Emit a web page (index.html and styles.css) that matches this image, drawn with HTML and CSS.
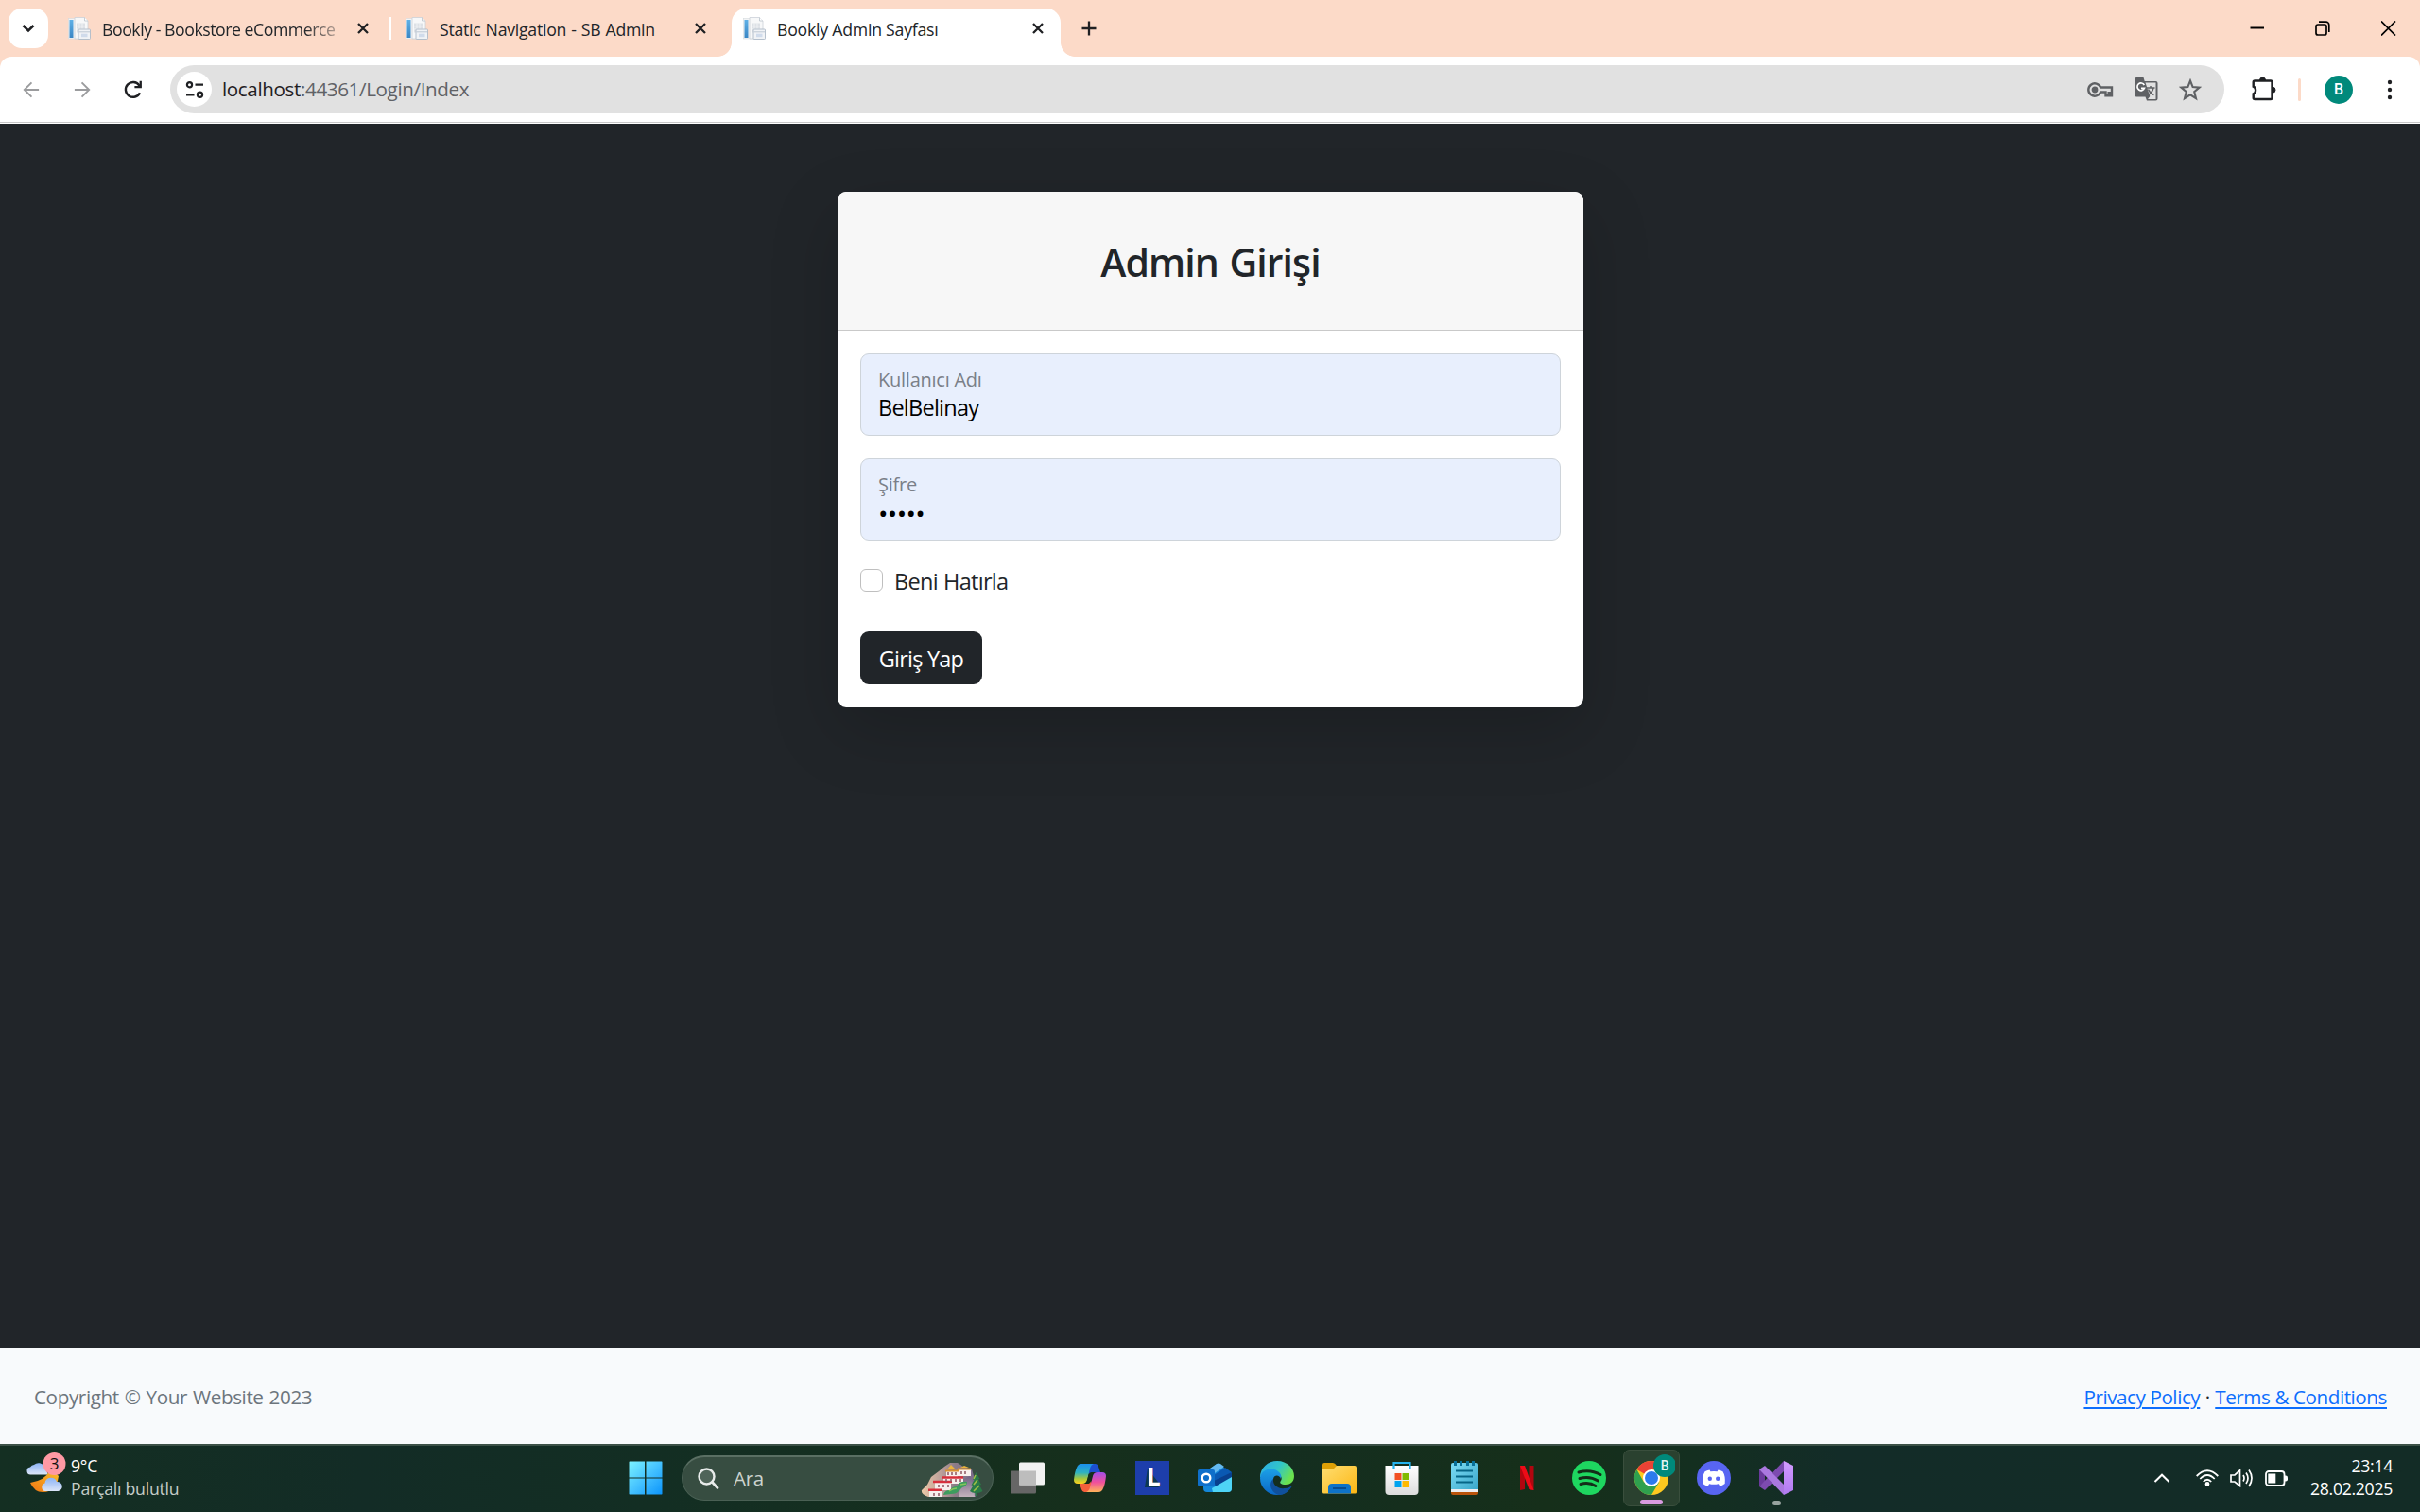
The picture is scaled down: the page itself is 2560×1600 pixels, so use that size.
FILE: index.html
```html
<!DOCTYPE html>
<html lang="tr">
<head>
<meta charset="utf-8">
<title>Bookly Admin Sayfası</title>
<link rel="stylesheet" href="styles.css">
</head>
<body>
<svg class="defs" width="0" height="0" aria-hidden="true">
  <defs>
    <linearGradient id="fav-blue" x1="0" y1="0" x2="0" y2="1"><stop offset="0" stop-color="#5fb0e6"/><stop offset="1" stop-color="#3a86c4"/></linearGradient>
    <linearGradient id="cloud" x1="0" y1="0" x2="0" y2="1"><stop offset="0" stop-color="#8db4f5"/><stop offset="1" stop-color="#dce6f8"/></linearGradient>
    <linearGradient id="moon" x1="1" y1="0" x2="0" y2="1"><stop offset="0" stop-color="#fbc02d"/><stop offset="1" stop-color="#ee7512"/></linearGradient>
    <linearGradient id="win" gradientUnits="userSpaceOnUse" x1="0" y1="0" x2="36" y2="36"><stop offset="0" stop-color="#7df4ff"/><stop offset=".5" stop-color="#45c2ff"/><stop offset="1" stop-color="#0a93fb"/></linearGradient>
    <linearGradient id="cop-a" x1="0" y1="0" x2="0" y2="1"><stop offset="0" stop-color="#1a8fee"/><stop offset=".45" stop-color="#2fb2c0"/><stop offset=".75" stop-color="#a8c83c"/><stop offset="1" stop-color="#ffd21e"/></linearGradient>
    <linearGradient id="cop-b" x1="0" y1="0" x2="0" y2="1"><stop offset="0" stop-color="#a24ee8"/><stop offset=".5" stop-color="#f0509c"/><stop offset="1" stop-color="#ffb35a"/></linearGradient>
    <linearGradient id="edge-a" x1="0" y1="0" x2="1" y2=".5"><stop offset="0" stop-color="#2aa8ea"/><stop offset=".55" stop-color="#32c6c8"/><stop offset="1" stop-color="#6be24e"/></linearGradient>
    <linearGradient id="edge-b" x1="0" y1="0" x2="0" y2="1"><stop offset="0" stop-color="#1ca0e6"/><stop offset="1" stop-color="#0a66c6"/></linearGradient>
    <linearGradient id="folder" x1="0" y1="0" x2="1" y2="1"><stop offset="0" stop-color="#ffde72"/><stop offset="1" stop-color="#fcb714"/></linearGradient>
    <linearGradient id="note" x1="0" y1="0" x2="1" y2="1"><stop offset="0" stop-color="#7ddcf5"/><stop offset="1" stop-color="#3aa7ca"/></linearGradient>
    <linearGradient id="bag" x1="0" y1="0" x2="0" y2="1"><stop offset="0" stop-color="#fff"/><stop offset="1" stop-color="#dcdcdc"/></linearGradient>
    <linearGradient id="rock" x1="0" y1="0" x2="1" y2="0"><stop offset="0" stop-color="#ecc9a8"/><stop offset=".4" stop-color="#b59a98"/><stop offset=".6" stop-color="#8d7c86"/><stop offset="1" stop-color="#7a6a8c"/></linearGradient>
    <linearGradient id="cliff" x1="0" y1="0" x2="0" y2="1"><stop offset="0" stop-color="#6f6182"/><stop offset="1" stop-color="#c5b3bd"/></linearGradient>
    <linearGradient id="vs" x1="0" y1="0" x2="0" y2="1"><stop offset="0" stop-color="#d39bff"/><stop offset="1" stop-color="#b07af0"/></linearGradient>
    <symbol id="favicon" viewBox="0 0 24 24">
      <rect x=".5" y="1.500" width="18" height="21.500" fill="#f2f4f6" stroke="#d5dade" stroke-width=".6"/>
      <rect x="1.500" y="3" width="4" height="19" fill="url(#fav-blue)"/>
      <path d="M7 .5h10.500l3.500 3.500V23H7z" fill="#f7f8f9" stroke="#cbd1d8" stroke-width=".8"/>
      <path d="M17.500 .5v3.500h3.500" fill="#fff" stroke="#b9c1ca" stroke-width=".8"/>
      <rect x="9" y="6.500" width="9" height="10" fill="#dde1e6"/>
      <path d="M9 9.800h9M9 13h9M12 6.500v10M15 6.500v10" stroke="#f5f6f8" stroke-width=".8"/>
      <rect x="11" y="13" width="12.500" height="10.500" rx=".8" fill="#f1f3f6" stroke="#aebac7" stroke-width=".9"/>
      <path d="M11.500 15.800h11.500" stroke="#bcc7d3"/>
      <rect x="14" y="17.700" width="6.500" height="3.500" fill="#d0dbeb"/>
    </symbol>
    <symbol id="close" viewBox="0 0 12 12"><path d="M1 1l10 10M11 1L1 11" stroke="#1f2023" stroke-width="2.300"/></symbol>
  </defs>
</svg>

<header class="browser">
  <div class="tabs">
    <button class="tab-menu"><svg width="14" height="10" viewBox="0 0 14 10"><path d="M1.500 2l5.500 5.500L12.500 2" fill="none" stroke="#1f2023" stroke-width="2.600"/></svg></button>
    <div class="tab tab-first">
      <svg class="favicon"><use href="#favicon"/></svg>
      <span class="tab-title faded">Bookly - Bookstore eCommerce</span>
      <svg class="close"><use href="#close"/></svg>
    </div>
    <div class="divider"></div>
    <div class="tab tab-second">
      <svg class="favicon"><use href="#favicon"/></svg>
      <span class="tab-title wide">Static Navigation - SB Admin</span>
      <svg class="close"><use href="#close"/></svg>
    </div>
    <div class="tab tab-active">
      <svg class="favicon"><use href="#favicon"/></svg>
      <span class="tab-title">Bookly Admin Sayfası</span>
      <svg class="close"><use href="#close"/></svg>
    </div>
    <svg class="plus" width="16" height="16" viewBox="0 0 16 16"><path d="M8 .5v15M.5 8h15" stroke="#1f2023" stroke-width="2.300"/></svg>
    <div class="window-buttons">
      <svg width="16" height="16" viewBox="0 0 16 16"><path d="M1.500 7.500h14.500" stroke="#000" stroke-width="2"/></svg>
      <svg width="16" height="16" viewBox="0 0 16 16" fill="none" stroke="#000" stroke-width="1.700"><rect x="1" y="4" width="11" height="11" rx="2"/><path d="M4 1.200h7.500a3.300 3.300 0 0 1 3.300 3.300V12"/></svg>
      <svg width="16" height="16" viewBox="0 0 16 16"><path d="M0 .5l15 15M15 .5l-15 15" stroke="#000" stroke-width="1.700"/></svg>
    </div>
  </div>
  <div class="toolbar">
    <svg class="nav" viewBox="0 0 20 20"><path d="M19 10H2M10.500 1.500L2 10l8.500 8.500" fill="none" stroke="#9b9c9e" stroke-width="2.100"/></svg>
    <svg class="nav" viewBox="0 0 20 20"><path d="M1 10h17M9.500 1.500L18 10l-8.500 8.500" fill="none" stroke="#9b9c9e" stroke-width="2.100"/></svg>
    <svg class="nav" viewBox="0 0 20 20"><path d="M17 13.200A7.900 7.900 0 1 1 16.200 5.200L17.500 7" fill="none" stroke="#1f2023" stroke-width="2.400"/><path d="M18.900.8v7.500h-7.500v-2.300h5.200V.8z" fill="#1f2023"/></svg>
    <div class="omnibox">
      <span class="site-info"><svg width="20" height="20" viewBox="0 0 20 20" fill="none" stroke="#1f2023" stroke-width="2.200"><circle cx="4.500" cy="4.700" r="2.600"/><path d="M10.500 4.700H19M1 15.300h8.500"/><circle cx="15.500" cy="15.300" r="2.600"/></svg></span>
      <span class="url">localhost<span class="path">:44361/Login/Index</span></span>
      <span class="omni-icons">
        <svg width="28" height="16" viewBox="0 0 28 16" fill="none" stroke="#5f6164" stroke-width="2.400"><path d="M14.200 5.500A6.700 6.700 0 1 0 14.200 10.500H19.500v3.700h3.200v-3h1v3h2.300V5.500z"/><circle cx="8" cy="8" r="2.200" fill="#5f6164"/></svg>
        <svg width="25" height="25" viewBox="0 0 25 25"><path d="M2 0h7.500l1.200 4H22.500a2 2 0 0 1 2 2v16.500a2 2 0 0 1-2 2H13l-1.500-4H2a2 2 0 0 1-2-2V2a2 2 0 0 1 2-2z" fill="#5f6164"/><path d="M11.500 5.500h11v17.500h-8.500l2.300-3z" fill="#e1e1e1"/><path d="M10.300 8A3.900 3.900 0 1 0 10.500 11.300H7" fill="none" stroke="#fff" stroke-width="1.700"/><path d="M13 11h8.500M17 9v2M20 11q-1 4.500-6 8M14.500 12.500q2 4.500 6 6" fill="none" stroke="#5f6164" stroke-width="1.500"/></svg>
        <svg width="24" height="24" viewBox="0 0 24 24"><path d="M12 2.500l2.600 6.600 7.100.5-5.500 4.500 1.800 7L12 17.300l-6 3.800 1.800-7L2.300 9.600l7.100-.5z" fill="none" stroke="#5f6164" stroke-width="2.100"/></svg>
      </span>
    </div>
    <svg class="puzzle" width="26" height="26" viewBox="0 0 26 26"><path d="M3.200 4.500H20q1.500 0 1.500 1.500v16.500q0 1.500-1.500 1.500H3.200q-1.500 0-1.500-1.500v-4.200a4.200 4.200 0 0 0 0-7.600V6q0-1.500 1.500-1.500z" fill="none" stroke="#1f2023" stroke-width="2.400"/><path d="M8.500 4a3 3 0 0 1 6 0zM22 11.200a3 3 0 0 1 0 6z" fill="#1f2023" stroke="#1f2023"/></svg>
    <div class="bar"></div>
    <div class="avatar">B</div>
    <svg class="dots" width="6" height="22" viewBox="0 0 6 22" fill="#1f2023"><circle cx="3" cy="3" r="2.200"/><circle cx="3" cy="11" r="2.200"/><circle cx="3" cy="19" r="2.200"/></svg>
  </div>
</header>

<main class="page">
  <section class="card">
    <div class="card-head"><h3>Admin Girişi</h3></div>
    <form class="card-body">
      <div class="field"><label>Kullanıcı Adı</label><span class="value">BelBelinay</span></div>
      <div class="field"><label>Şifre</label><span class="value secret">•••••</span></div>
      <div class="remember"><span class="checkbox"></span><label>Beni Hatırla</label></div>
      <button class="submit" type="button">Giriş Yap</button>
    </form>
  </section>
</main>

<footer class="footer">
  <span class="copyright">Copyright © Your Website 2023</span>
  <span class="links"><a href="#">Privacy Policy</a><span class="sep">·</span><a href="#">Terms &amp; Conditions</a></span>
</footer>

<div class="taskbar">
  <div class="weather">
    <svg width="42" height="44" viewBox="0 0 42 44">
      <path d="M5 24.500a3.500 3.500 0 0 1-1-8 5.500 5.500 0 0 1 4-2.500 7 7 0 0 1 11 2l4 8.500z" fill="url(#cloud)"/>
      <path d="M4 33Q19 31 25 20a18 18 0 0 1 9 6q-1 10-9 15.500Q10 47 4 33z" fill="url(#moon)"/>
      <path d="M20 42a4.400 4.400 0 0 1-.5-8.600 6.500 6.500 0 0 1 12.500-1.400 5 5 0 0 1 1.500 10z" fill="url(#cloud)"/>
      <circle cx="29.500" cy="13" r="12" fill="#ff99a4"/>
      <text x="29.500" y="19" text-anchor="middle" class="badge-text">3</text>
    </svg>
    <div class="weather-text"><span class="temp">9°C</span><span class="sky">Parçalı bulutlu</span></div>
  </div>
  <div class="apps">
    <div class="app start"><svg width="36" height="36" viewBox="0 0 36 36"><path d="M1 .5h16v17H.5V1zM18.500.5H35l.5.500v16.500h-17zM.5 18.500H17v17H1l-.5-.5zM18.500 18.500h17V35l-.5.500H18.500z" fill="url(#win)"/></svg></div>
    <div class="search">
      <svg class="glass" width="23" height="23" viewBox="0 0 23 23"><circle cx="9.500" cy="9.500" r="8" fill="#687c72" fill-opacity=".5" stroke="#e8ebea" stroke-width="2.400"/><path d="M15.500 15.500l5.500 6" stroke="#e8ebea" stroke-width="2.700" stroke-linecap="round"/></svg>
      <span class="search-text">Ara</span>
      <svg class="scene" width="66" height="38" viewBox="0 0 66 38">
        <path d="M8 37Q0 34 1 30l6-6 4-8 8-6 6-5 6-4h8l6 4 9 3 3 10 2 14-1 5z" fill="url(#rock)"/>
        <path d="M44 19l8-4 4 10 1 12H40z" fill="url(#cliff)"/>
        <path d="M27 10h12v6H27zM39 8h14v7H39zM24 17h21v6H24zM15 22h17v8H15zM9 31h13v6H9z" fill="#f6efec"/>
        <path d="M28 8l4-5 5 5zM42 6l4-2 5 2z" fill="#eab43c"/>
        <path d="M26 9.500h14M39 7.500h14" stroke="#d9912f" stroke-width="1.800"/>
        <path d="M23 16.500h22M13 21h20M8 29.700h15" stroke="#d8303c" stroke-width="2.400"/>
        <path d="M29 11v3m4-3v3m4-3v3m6-4v3m4-3v3m-20 5v3m5-3v3m5-3v3m5-3v3m-23 3v3m5-3v3m5-3v3m-15 6v3m5-3v3" stroke="#8d5560" stroke-width="1.500"/>
        <path d="M24 35q1-5 7-5 2-4 7-4l3-4q4-2 8-1 0 5-5 6l-4 4q-2 3-8 3z" fill="#3d9c5e"/>
        <path d="M30 31q4-3 8-3m4-4l6-1" fill="none" stroke="#86c65c" stroke-width="1.500"/>
        <path d="M58.500 11l4 7-1.500.5 3 5.500-2 .5 3.500 6.500q-3 2-6 2v3h-2v-3q-3 0-5.500-2l3.500-6-2-.5 3-5.500-1.500-.5z" fill="#2a7a48"/>
        <path d="M58 14l-2 4m4 1l-4 5m6 1l-6 6" stroke="#9dbf45" stroke-width="1.600"/>
      </svg>
    </div>
    <div class="app"><svg width="36" height="36" viewBox="0 0 36 36"><rect x="0" y="10.500" width="27" height="24" rx="1.500" fill="#666"/><rect x="9" y="1.500" width="27" height="24" rx="1.500" fill="#f2f2f2"/><rect x="9" y="10.500" width="18" height="15" fill="#bdbdbd"/></svg></div>
    <div class="app"><svg width="36" height="36" viewBox="0 0 36 36"><path d="M13 3h11q2 0 3 3l2 6H20q-2 0-3 3z" fill="#1c4fd0"/><path d="M23 33H12q-2 0-3-3l-2-6h9q2 0 3-3z" fill="#f4603c"/><path d="M9 3h13q-3 1-4 5l-3 12q-1 4-5 4H5q-4 0-4-4 1-9 3-13 1.500-4 5-4z" fill="url(#cop-a)"/><path d="M27 33H14q3-1 4-5l3-12q1-4 5-4h5q4 0 4 4-1 9-3 13-1.500 4-5 4z" fill="url(#cop-b)"/><path d="M16.500 14.500q1-2.500 3.500-2.500h3q-2 1-3 5l-1 4q-1 3-3.500 3H12.500q2-1 3-5z" fill="#16301b"/></svg></div>
    <div class="app"><svg width="36" height="36" viewBox="0 0 36 36"><rect width="36" height="36" fill="#1d3eab"/><path d="M13 8l-3 20h14l3-2z" fill="#0d3850"/><text x="12" y="26" class="letter-l">L</text></svg></div>
    <div class="app"><svg width="36" height="36" viewBox="0 0 36 36"><path d="M6 13L19 4q2-1.500 4 0l13 9v16q0 4-4 4H10q-4 0-4-4z" fill="#1487da"/><path d="M13 8l7-5q2-1 4 0l4 3-13 9z" fill="#64b9f0"/><path d="M17 15l12-8 7 5v4L18 28z" fill="#0a59b3"/><path d="M17 21l19-9v6L20 29z" fill="#08408e"/><path d="M15 29l21-12v12q0 4-4 4H16z" fill="#4ed4f6"/><rect y="9" width="18" height="18" rx="2" fill="#0f6fca"/><circle cx="9" cy="18" r="4.300" fill="none" stroke="#fff" stroke-width="2.400"/></svg></div>
    <div class="app"><svg width="36" height="36" viewBox="0 0 36 36"><path d="M0 17A18 17 0 0 1 18 0C29 0 36 8 36 16c0 6-4 9-9 9-5 0-7-2-5-4 2-3 0-7-5-7-8 0-12 4-17 3z" fill="url(#edge-a)"/><path d="M0 18C1 9 12 6 19 11c3 2 4 5 3 8-1-4-7-5-8 0-2 8 6 15 15 13-3 3-7 4-11 4A18 18 0 0 1 0 18z" fill="url(#edge-b)"/><path d="M14 19c-1 7 6 11 12 10 4 0 6-2 8-3-2 5-8 10-14 10-8-2-12-12-6-17z" fill="#10509c"/></svg></div>
    <div class="app"><svg width="36" height="36" viewBox="0 0 36 36"><path d="M0 4q0-2 2-2h9q2 0 4 3v4H0z" fill="#dea006"/><path d="M0 8h12l3-3h19q2 0 2 2v26q0 1.500-1.500 1.500h-33Q0 34.500 0 33z" fill="url(#folder)"/><path d="M6 34.500V28q0-4 4-4h16q4 0 4 4v6.500z" fill="#0e73c9"/><path d="M11 29h14" stroke="#084d91" stroke-width="2"/></svg></div>
    <div class="app"><svg width="36" height="36" viewBox="0 0 36 36"><path d="M.5 5h35v27q0 4-4 4h-27q-4 0-4-4z" fill="url(#bag)"/><path d="M9.500 8V2h17v6" fill="none" stroke="#24b3ee" stroke-width="2.200"/><path fill="#f25022" d="M10.500 13h7v7h-7z"/><path fill="#7fba00" d="M18.500 13h7v7h-7z"/><path fill="#00a4ef" d="M10.500 21h7v7h-7z"/><path fill="#ffb900" d="M18.500 21h7v7h-7z"/></svg></div>
    <div class="app"><svg width="36" height="36" viewBox="0 0 36 36"><path d="M4 31h28v3q0 2-2 2H6q-2 0-2-2z" fill="#b9530b"/><path d="M4 29h28v4H4z" fill="#ececf0"/><path d="M4 4q0-2 2-2h24q2 0 2 2v26H4z" fill="url(#note)"/><path d="M9 10.500h18M9 16.500h18M9 22.500h18" stroke="#066586" stroke-width="2"/><path d="M8.500 0v5M14.500 0v5M21.500 0v5M27.500 0v5" stroke="#08709a" stroke-width="3"/></svg></div>
    <div class="app"><svg width="36" height="36" viewBox="0 0 36 36"><path d="M11 5h5v25l-5 1zM20.500 5h5v26l-5-1z" fill="#b1060f"/><path d="M11 5h5l9.500 26-5-1z" fill="#ed0b17"/></svg></div>
    <div class="app"><svg width="36" height="36" viewBox="0 0 36 36"><circle cx="18" cy="18" r="18" fill="#1ed760"/><path d="M7 12q12-3.500 23 2.500M8 18.500q10.500-3 19.500 2.500M9 24.500q9-2.500 16 2" fill="none" stroke="#142d19" stroke-width="3" stroke-linecap="round"/></svg></div>
    <div class="app current"><svg width="50" height="60" viewBox="0 0 50 60"><g transform="translate(7 12)"><circle cx="18" cy="18" r="18" fill="#ffc91f"/><path d="M18 18L2.400 9A18 18 0 0 1 33.600 9H18z" fill="#ea4235"/><path d="M2.400 9A18 18 0 0 0 18 36l8-13.500L10 22.500z" fill="#2fa14e"/><circle cx="18" cy="18" r="9" fill="#fff"/><circle cx="18" cy="18" r="7" fill="#2b7bee"/></g><circle cx="39" cy="17" r="12" fill="#00897b"/><text x="39" y="22" text-anchor="middle" class="profile-text">B</text></svg></div>
    <div class="app"><svg width="36" height="36" viewBox="0 0 36 36"><circle cx="18" cy="18" r="18" fill="#5865f2"/><path d="M13.500 9.500Q10.500 10 8.500 11.200 5.500 16 6.300 24q2.700 2 5.500 2.500l1.300-2.300q4.900 1.300 9.800 0l1.300 2.300q2.800-.5 5.500-2.500.8-8-2.200-12.800-2-1.200-5-1.700l-.9 1.700q-3.600-.6-7.200 0z" fill="#fff"/><circle cx="13.800" cy="18.700" r="2.200" fill="#5865f2"/><circle cx="22.200" cy="18.700" r="2.200" fill="#5865f2"/></svg></div>
    <div class="app running"><svg width="36" height="36" viewBox="0 0 36 36"><path d="M0 9l6 5v8l-6 5z" fill="#6a3a9c"/><path d="M0 27L26 0v11L6 31z" fill="#7d4bb0"/><path d="M26 0l10 5v26l-10 5z" fill="url(#vs)"/><path d="M0 9l6-4 20 20v11z" fill="#aa78df"/></svg></div>
  </div>
  <div class="tray">
    <svg class="chevron" width="18" height="10" viewBox="0 0 18 10"><path d="M1.500 9L9 1.700 16.500 9" fill="none" stroke="#fff" stroke-width="2"/></svg>
    <svg width="24" height="20" viewBox="0 0 24 20" fill="none" stroke="#fff" stroke-width="1.800"><path d="M.7 8Q12-3.500 23.300 8M4.300 11Q12 3 19.700 11M7.800 14Q12 9.500 16.200 14"/><circle cx="12" cy="16.500" r="1.500" fill="#fff"/></svg>
    <svg width="25" height="20" viewBox="0 0 25 20" fill="none" stroke="#fff" stroke-width="1.700"><path d="M1 7h4l5.500-5v16.500L5 14H1zM14 7q2 3.300 0 6.500M17 4.500q4 5.700 0 11.500M20 1.500q6 8.700 0 17.500"/></svg>
    <svg width="24" height="17" viewBox="0 0 24 17"><rect x="1" y="1" width="19.500" height="15" rx="3" fill="none" stroke="#fff" stroke-width="1.800"/><rect x="3.300" y="3.500" width="8" height="10" fill="#fff"/><path d="M21 5.500h1q2 0 2 2v2q0 2-2 2h-1z" fill="#fff"/></svg>
    <div class="clock"><span>23:14</span><span>28.02.2025</span></div>
  </div>
</div>
</body>
</html>
```
FILE: styles.css
```css
* { box-sizing: border-box; }

body {
  margin: 0;
  width: 2560px;
  height: 1600px;
  overflow: hidden;
  display: flex;
  flex-direction: column;
  background: #212529;
  color: #212529;
  font-family: "Open Sans", "Noto Sans", sans-serif;
  letter-spacing: -0.015em;
  white-space: nowrap;
}

svg { display: block; flex: none; }
.defs { position: absolute; }
button { border: 0; padding: 0; font: inherit; letter-spacing: inherit; }

/* Browser chrome */
.browser { height: 131px; flex: none; background: #fcdac8; }
.tabs { height: 60px; display: flex; align-items: center; padding-left: 9px; }
.tab-menu {
  width: 42px; height: 42px; border-radius: 14px; background: #fff;
  display: flex; align-items: center; justify-content: center;
}
.tab { display: flex; align-items: center; height: 60px; }
.tab-first { width: 360px; padding: 0 21px; }
.tab-second { width: 360px; padding: 0 27px 0 15px; }
.tab-active {
  position: relative; width: 348px; height: 51px; margin-top: 9px;
  padding: 0 18px 9px 12px; border-radius: 15px 15px 0 0; background: #fff;
}
.tab-active::before, .tab-active::after {
  content: ""; position: absolute; bottom: 0; width: 15px; height: 15px;
}
.tab-active::before { left: -15px; background: radial-gradient(circle at 0 0, transparent 14.5px, #fff 15.2px); }
.tab-active::after { right: -15px; background: radial-gradient(circle at 100% 0, transparent 14.5px, #fff 15.2px); }
.favicon { width: 24px; height: 24px; }
.tab-title { margin: 2px 0 0 12px; font-size: 17.7px; line-height: 24px; }
.wide { letter-spacing: -0.015em; word-spacing: 0.045em; }
.faded {
  width: 254px; letter-spacing: -0.026em;
  -webkit-mask-image: linear-gradient(90deg, #000 84%, rgba(0, 0, 0, .2));
  mask-image: linear-gradient(90deg, #000 84%, rgba(0, 0, 0, .2));
}
.close { width: 12px; height: 12px; margin-left: auto; }
.divider { width: 3px; height: 24px; background: #fff; }
.plus { margin-left: 22px; }
.window-buttons { display: flex; gap: 54px; margin-left: auto; padding-right: 25px; }

.toolbar {
  height: 71px; background: #fff; border-radius: 12px 12px 0 0;
  display: flex; align-items: center; padding: 0 29px 1px 24px;
  background-image: linear-gradient(#c8c8c8, #c8c8c8);
  background-size: 100% 1px; background-position: 0 69px; background-repeat: no-repeat;
}
.nav { width: 18px; height: 20px; margin-right: 36px; }
.nav:nth-child(3) { width: 20px; margin-right: 29px; margin-left: -1px; }
.omnibox {
  width: 2173px; height: 51px; border-radius: 26px; background: #e1e1e1;
  display: flex; align-items: center; padding: 0 24px 0 7px; margin-top: -1px;
}
.site-info {
  width: 37px; height: 37px; border-radius: 50%; background: #fff;
  display: flex; align-items: center; justify-content: center;
}
.url { margin: -1px 0 0 11px; font-size: 20.6px; color: #1f2023; letter-spacing: -0.018em; }
.path { color: #606266; }
.omni-icons { display: flex; align-items: center; gap: 22px; margin-left: auto; }
.puzzle { margin: -2px 0 0 29px; }
.bar { width: 3px; height: 24px; border-radius: 2px; background: #fcdac8; margin-left: 23px; }
.avatar {
  width: 30px; height: 30px; border-radius: 50%; background: #00897b; color: #fff;
  margin-left: 25px; font: 500 16px/30px Roboto, sans-serif; text-align: center;
}
.dots { margin-left: auto; }

/* Sign-in page */
.page { flex: 1; display: flex; justify-content: center; align-items: flex-start; padding-top: 72px; }
.card {
  width: 789px; border-radius: 9px; overflow: hidden; background: #fff;
  margin-left: 1px; box-shadow: 0 24px 72px rgba(0, 0, 0, .175);
}
.card-head {
  height: 147px; background: #f7f7f7; border-bottom: 1px solid #c9c9c9;
  display: flex; align-items: center; justify-content: center; padding-top: 2px;
}
.card-head h3 { margin: 0; font-size: 41px; font-weight: 600; letter-spacing: -0.022em; word-spacing: 0.04em; }
.card-body { padding: 24px; display: flex; flex-direction: column; align-items: flex-start; }
.field {
  width: 741px; height: 87px; margin-bottom: 24px; padding: 12px 18px 0;
  border: 1px solid #ced4da; border-radius: 9px; background: #e8effd;
  display: flex; flex-direction: column; gap: 2px;
}
.field label { font-size: 20px; line-height: 30px; color: #7a7f88; }
.value { font-size: 23.500px; line-height: 24px; color: #000; letter-spacing: -0.032em; }
.secret { font-size: 28px; letter-spacing: -0.7px; line-height: 26px; }
.remember {
  display: flex; align-items: center; height: 24px; margin: 6px 0 42px; gap: 12px;
  font-size: 23.500px; letter-spacing: -0.03em; word-spacing: 0.03em;
}
.remember label { margin-top: 2px; }
.checkbox { width: 24px; height: 24px; border: 1px solid #bfbfbf; border-radius: 6px; }
.submit {
  height: 56px; width: 129px; padding-top: 2px; border-radius: 9px;
  background: #212529; color: #fff; font-size: 23.500px; letter-spacing: -0.033em;
}

.footer {
  height: 102px; flex: none; background: #f8fafc; padding: 2px 35px 0 36px;
  display: flex; align-items: center; justify-content: space-between; font-size: 20.700px;
}
.copyright { color: #6c757d; letter-spacing: -0.02em; word-spacing: 0.05em; }
.links { letter-spacing: -0.022em; }
.links a { color: #0d6efd; text-decoration-thickness: 2px; text-underline-offset: 3px; }
.sep { margin: 0 5.500px; }

/* Taskbar */
.taskbar {
  height: 72px; flex: none; border-top: 2px solid #3c5147; padding-bottom: 2px;
  display: flex; align-items: center; color: #fff; font-size: 17.700px;
  background: linear-gradient(90deg, #142f22 0, #132c26 15%, #132e23 27%, #162f1c 45%, #142e20 52%, #162f1a 64%, #142f20 70%, #132c28 76%, #132c26 100%);
}
.weather { width: 653px; padding-left: 28px; display: flex; align-items: center; gap: 5px; }
.weather svg { margin-top: -12px; }
.weather-text { display: flex; flex-direction: column; line-height: 24px; margin-top: -2px; }
.sky { color: #c4ccc8; letter-spacing: -0.014em; }
.badge-text { font-size: 17px; fill: #111; }
.apps { display: flex; align-items: center; gap: 6px; }
.app { position: relative; width: 60px; height: 60px; display: flex; align-items: center; justify-content: center; border-radius: 7px; }
.start { margin-right: 2px; }
.search {
  width: 330px; height: 48px; border-radius: 24px; background: #374d41;
  border: 1px solid #4a6054; border-top: 2px solid #5a6f63;
  display: flex; align-items: center; padding: 0 10px 0 16px;
}
.search-text { margin: -1px 0 0 15px; font-size: 20.500px; color: #ccd4cf; }
.scene { margin-left: auto; margin-top: 2px; }
.current { background: #2a412f; border: 1px solid #3a4f3d; }
.current::after, .running::after { content: ""; position: absolute; bottom: 1px; height: 5px; border-radius: 3px; }
.current::after { width: 24px; background: #d99be0; }
.running::after { width: 9px; background: #98a39f; }
.letter-l { font: 700 26px "Open Sans", sans-serif; fill: #fff; }
.profile-text { font: 500 14px Roboto, sans-serif; fill: #e3f3f1; }
.tray { display: flex; align-items: center; margin-left: auto; padding-right: 29px; }
.tray svg { margin-right: 12px; }
.tray .chevron { margin-right: 27px; }
.clock { width: 99px; display: flex; flex-direction: column; align-items: flex-end; line-height: 24px; margin-top: -2px; letter-spacing: -0.018em; }
```
